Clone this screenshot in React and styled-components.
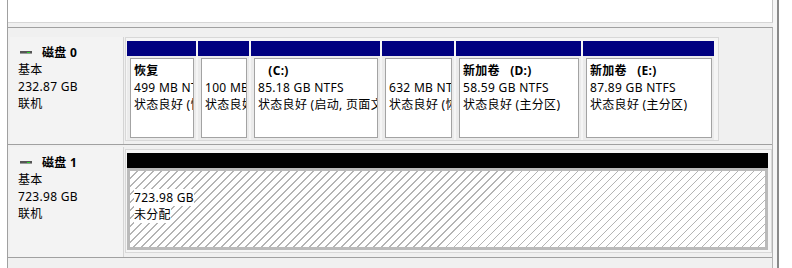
import React from "react";
import styled, { createGlobalStyle } from "styled-components";

const GlobalStyle = createGlobalStyle`
  html, body {
    margin: 0;
    padding: 0;
    background: #fff;
  }
  body {
    font-family: "Noto Sans", "Noto Sans CJK SC", sans-serif;
    font-size: 12px;
    letter-spacing: 0.3px;
    color: #000;
  }
`;

const Screen = styled.div`
  width: 792px;
  height: 268px;
  overflow: hidden;
  background: #fff;
  padding-left: 7px;
  box-sizing: border-box;
`;

const Frame = styled.div`
  width: 772px;
  height: 268px;
  box-sizing: border-box;
  border-left: 1px solid #a0a0a0;
  border-right: 2px solid #8a8a8a;
  background: #f6f6f6;
  display: flex;
  flex-direction: column;
`;

const VolumeList = styled.div`
  height: 23px;
  box-sizing: border-box;
  margin-right: 4px;
  background: #fff;
  border-right: 1px solid #c4c4c4;
  border-bottom: 1px solid #d6d6d6;
`;

const Splitter = styled.div`
  height: 4px;
  margin-right: 4px;
  background: #f0f0f0;
`;

const GraphPane = styled.div`
  flex: 1;
  margin-right: 4px;
  background: #f0f0f0;
  border-top: 1px solid #a0a0a0;
  border-right: 1px solid #b4b4b4;
`;

const DiskRow = styled.div`
  display: flex;
  align-items: flex-start;
  box-sizing: border-box;
  height: ${(p) => p.$height}px;
  padding: ${(p) => p.$top}px 0 0 2px;
  border-bottom: 1px solid #a0a0a0;
`;

const DiskLabel = styled.div`
  align-self: stretch;
  width: 114px;
  box-sizing: border-box;
  margin-right: 1px;
  padding: 6px 0 0 8px;
  background: #f3f3f3;
  border-right: 1px solid #d4d4d4;
  line-height: 17px;
`;

const DiskName = styled.div`
  display: flex;
  align-items: center;
  height: 18px;
  font-weight: 700;
`;

const DiskIcon = styled.svg`
  width: 12px;
  height: 5px;
  margin: 0 10px 0 2px;
  flex: none;
`;

const PartitionStrip = styled.div`
  display: flex;
  gap: 2px;
  box-sizing: border-box;
  height: 104px;
  margin-top: ${(p) => p.$offset || 0}px;
  padding: 3px 3px 0 1px;
  background: #f5f5f5;
  border: 1px solid #d8d8d8;
  ${(p) => (p.$fill ? "flex: 1;" : `width: ${p.$width}px;`)}
`;

const Segment = styled.div`
  display: flex;
  flex-direction: column;
  width: ${(p) => p.$width}px;
  flex: ${(p) => (p.$width ? "none" : "1")};
`;

const Header = styled.div`
  height: 15px;
  background: ${(p) => p.$color};
`;

const SegmentBody = styled.div`
  padding: 2px 2px 2px 3px;
  background: #ebebeb;
`;

const VolumeBox = styled.div`
  height: 80px;
  box-sizing: border-box;
  padding: 3px 2px 0 3px;
  background: #fff;
  border: 1px solid #a3a3a3;
  line-height: 17px;
  white-space: pre;
  overflow: hidden;
`;

const VolumeName = styled.div`
  font-weight: 700;
`;

const HatchBox = styled.div`
  height: 82px;
  box-sizing: border-box;
  padding: 18px 0 0 4px;
  border: 3px solid #bababa;
  line-height: 17px;
  background: repeating-linear-gradient(
    135deg,
    #ffffff 0,
    #ffffff 4.8px,
    #b4b4b4 4.8px,
    #b4b4b4 5.66px
  );
`;

const HatchText = styled.span`
  background: #fff;
`;

const disks = [
  {
    name: "磁盘 0",
    kind: "基本",
    size: "232.87 GB",
    state: "联机",
    top: 9,
    height: 117,
    width: 594,
    parts: [
      { w: 69, name: "恢复", size: "499 MB NTFS", status: "状态良好 (恢复分区)" },
      { w: 51, name: "", size: "100 MB", status: "状态良好 (EFI 系统分区)" },
      {
        w: 129,
        name: "   (C:)",
        size: "85.18 GB NTFS",
        status: "状态良好 (启动, 页面文件, 故障转储, 基本数据分区)",
      },
      { w: 72, name: "", size: "632 MB NTFS", status: "状态良好 (恢复分区)" },
      { w: 125, name: "新加卷   (D:)", size: "58.59 GB NTFS", status: "状态良好 (主分区)" },
      { w: 131, name: "新加卷   (E:)", size: "87.89 GB NTFS", status: "状态良好 (主分区)" },
    ],
  },
  {
    name: "磁盘 1",
    kind: "基本",
    size: "723.98 GB",
    state: "联机",
    top: 2,
    height: 113,
    unallocated: { size: "723.98 GB", label: "未分配" },
  },
];

const HardDiskIcon = () => (
  <DiskIcon viewBox="0 0 12 5">
    <rect x="0" y="1" width="12" height="3" fill="#555" />
    <rect x="0" y="3" width="12" height="1" fill="#999" />
    <rect x="7" y="2" width="3" height="1" fill="#2fd12f" />
  </DiskIcon>
);

const App = () => {
  return (
    <Screen>
      <GlobalStyle />
      <Frame>
        <VolumeList />
        <Splitter />
        <GraphPane>
          {disks.map((disk) => (
            <DiskRow key={disk.name} $top={disk.top} $height={disk.height}>
              <DiskLabel>
                <DiskName>
                  <HardDiskIcon />
                  {disk.name}
                </DiskName>
                <div>{disk.kind}</div>
                <div>{disk.size}</div>
                <div>{disk.state}</div>
              </DiskLabel>

              {disk.parts ? (
                <PartitionStrip $width={disk.width}>
                  {disk.parts.map((part, i) => (
                    <Segment key={`part_${i}`} $width={part.w}>
                      <Header $color="#000080" />
                      <SegmentBody>
                        <VolumeBox>
                          <VolumeName>{part.name || " "}</VolumeName>
                          <div>{part.size}</div>
                          <div>{part.status}</div>
                        </VolumeBox>
                      </SegmentBody>
                    </Segment>
                  ))}
                </PartitionStrip>
              ) : (
                <PartitionStrip $fill $offset={2}>
                  <Segment>
                    <Header $color="#000" />
                    <HatchBox>
                      <div>
                        <HatchText>{disk.unallocated.size}</HatchText>
                      </div>
                      <div>
                        <HatchText>{disk.unallocated.label}</HatchText>
                      </div>
                    </HatchBox>
                  </Segment>
                </PartitionStrip>
              )}
            </DiskRow>
          ))}
        </GraphPane>
      </Frame>
    </Screen>
  );
};

export default App;
